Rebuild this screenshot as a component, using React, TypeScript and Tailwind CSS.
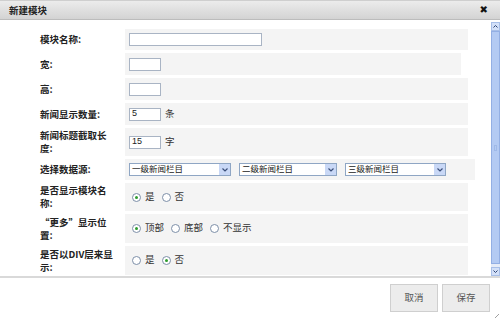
import type { ReactNode } from "react";

const FONT = { fontFamily: '"Liberation Sans", "Noto Sans CJK SC", sans-serif' };

function Row({
  label,
  h,
  w = "w-[343px]",
  children,
}: {
  label: ReactNode;
  h: string;
  w?: string;
  children?: ReactNode;
}) {
  return (
    <div className={`flex items-center ${h}`}>
      <div
        className="w-[125px] pl-[40px] pr-[4px] text-[9.5px] font-bold leading-[13px] text-[#222]"
        style={{ fontFamily: '"Noto Sans CJK SC", sans-serif' }}
      >
        {label}
      </div>
      <div className={`flex h-full items-center bg-[#f4f4f4] pl-[4px] ${w}`}>{children}</div>
    </div>
  );
}

function Radio({ on, text }: { on?: boolean; text: string }) {
  return (
    <label className="mr-[3px] flex items-center gap-[4px] text-[9.5px] text-[#333]">
      <span className="flex h-[9px] w-[9px] items-center justify-center rounded-full border border-[#7d8fa8] bg-white">
        {on && <span className="h-[3px] w-[3px] rounded-full bg-[#2e9b2e]" />}
      </span>
      <span className="mr-[4px]">{text}</span>
    </label>
  );
}

function Select({ text, w }: { text: string; w: string }) {
  return (
    <div className={`flex h-[13px] items-center justify-between border border-[#8fa6c4] bg-white pl-[2px] ${w}`}>
      <span className="text-[8.5px] leading-none text-[#222]">{text}</span>
      <span className="flex h-[11px] w-[11px] items-center justify-center bg-[#c9d8f6]">
        <svg width="6" height="4" viewBox="0 0 6 4">
          <path d="M0.5 0.5 L3 3 L5.5 0.5" fill="none" stroke="#3b4f7a" strokeWidth="1.2" />
        </svg>
      </span>
    </div>
  );
}

function Input({ w, value }: { w: string; value?: string }) {
  return (
    <div className={`flex h-[13px] items-center border border-[#a9b4c4] bg-white px-[2px] text-[9px] text-[#222] ${w}`}>
      {value}
    </div>
  );
}

export default function App() {
  return (
    <div className="flex h-[319px] w-[500px] flex-col overflow-hidden bg-white" style={FONT}>
      {/* title bar */}
      <div className="flex h-[20px] shrink-0 items-center border-b border-t border-b-[#bcbcbc] border-t-[#cfcfcf] bg-gradient-to-b from-[#ececec] to-[#d3d3d3] pl-[9px] pr-[12px]">
        <span
          className="text-[9.5px] font-bold text-[#222]"
          style={{ fontFamily: '"Noto Sans CJK SC", sans-serif' }}
        >
          新建模块
        </span>
        <span className="ml-auto text-[10px] font-bold leading-none text-[#111]" style={{ fontFamily: '"DejaVu Sans", sans-serif' }}>
          ✖
        </span>
      </div>

      {/* body */}
      <div className="flex h-[256px] shrink-0">
        <div className="flex flex-1 flex-col gap-[3px] pt-[9px]">
          <Row label="模块名称:" h="h-[21px]">
            <Input w="w-[133px]" />
          </Row>
          <Row label="宽:" h="h-[22px]" w="w-[336px]">
            <Input w="w-[32px]" />
          </Row>
          <Row label="高:" h="h-[22px]">
            <Input w="w-[32px]" />
          </Row>
          <Row label="新闻显示数量:" h="h-[22px]">
            <Input w="w-[32px]" value="5" />
            <span className="ml-[4px] text-[9.5px] text-[#333]">条</span>
          </Row>
          <Row
            label={
              <>
                新闻标题截取长
                <br />
                度:
              </>
            }
            h="h-[28px]"
          >
            <Input w="w-[32px]" value="15" />
            <span className="ml-[4px] text-[9.5px] text-[#333]">字</span>
          </Row>
          <Row label="选择数据源:" h="h-[21px]" w="w-[350px]">
            <div className="flex gap-[8px]">
              <Select text="一级新闻栏目" w="w-[102px]" />
              <Select text="二级新闻栏目" w="w-[98px]" />
              <Select text="三级新闻栏目" w="w-[101px]" />
            </div>
          </Row>
          <Row
            label={
              <>
                是否显示模块名
                <br />
                称:
              </>
            }
            h="h-[28px]"
          >
            <div className="flex pl-[3px]">
              <Radio on text="是" />
              <Radio text="否" />
            </div>
          </Row>
          <Row
            label={
              <>
                “更多”显示位
                <br />
                置:
              </>
            }
            h="h-[29px]"
          >
            <div className="flex pl-[3px]">
              <Radio on text="顶部" />
              <Radio text="底部" />
              <Radio text="不显示" />
            </div>
          </Row>
          <Row
            label={
              <>
                是否以DIV层来显
                <br />
                示:
              </>
            }
            h="h-[29px]"
          >
            <div className="flex pl-[3px]">
              <Radio text="是" />
              <Radio on text="否" />
            </div>
          </Row>
        </div>

        {/* scrollbar */}
        <div className="mt-[2px] flex w-[9px] flex-col bg-[#e6ecf8]">
          <div className="flex h-[9px] items-center justify-center border border-[#a8bfe8] bg-[#d3e0f8]">
            <svg width="5" height="3" viewBox="0 0 5 3">
              <path d="M0.5 2.5 L2.5 0.5 L4.5 2.5" fill="none" stroke="#2d4474" strokeWidth="1" />
            </svg>
          </div>
          <div className="flex flex-1 items-center justify-center border border-[#93afe4] bg-[#b3caf3]">
            <div className="h-[6px] w-[3px] border border-[#9fb9e8]" />
          </div>
          <div className="h-[3px] bg-[#e6ecf8]" />
          <div className="flex h-[9px] items-center justify-center border border-[#a8bfe8] bg-[#d3e0f8]">
            <svg width="5" height="3" viewBox="0 0 5 3">
              <path d="M0.5 0.5 L2.5 2.5 L4.5 0.5" fill="none" stroke="#2d4474" strokeWidth="1" />
            </svg>
          </div>
        </div>
      </div>

      {/* divider */}
      <div className="h-[2px] shrink-0 bg-[#d9d9d9]" />

      {/* footer */}
      <div className="relative flex flex-1 items-start justify-end gap-[4px] pr-[10px] pt-[6px]">
        <button className="h-[28px] w-[48px] border border-[#cfcfcf] bg-[#ececec] text-[9.5px] text-[#555]">
          取消
        </button>
        <button className="h-[28px] w-[48px] border border-[#cfcfcf] bg-[#ececec] text-[9.5px] text-[#555]">
          保存
        </button>
        <svg className="absolute bottom-[1px] right-[1px]" width="4" height="4" viewBox="0 0 4 4">
          <path d="M0 4 L4 0" stroke="#888" strokeWidth="0.8" />
        </svg>
      </div>
    </div>
  );
}
